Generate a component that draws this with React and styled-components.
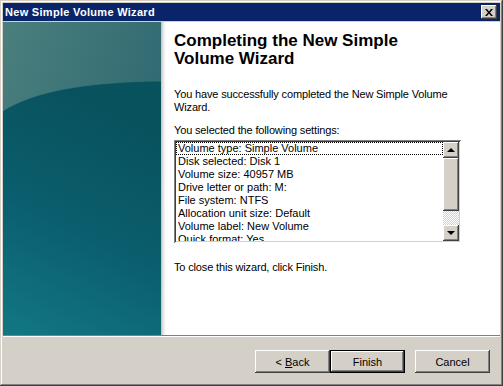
import React from 'react';
import styled, { createGlobalStyle } from 'styled-components';

const GlobalStyle = createGlobalStyle`
  html, body { margin: 0; padding: 0; background: #d4d0c8; }
  body { font-family: "Liberation Sans", Arial, sans-serif; font-size: 11px; }
`;

const Window = styled.div`
  width: 503px;
  height: 386px;
  box-sizing: border-box;
  padding: 3px;
  background: #d4d0c8;
  display: flex;
  flex-direction: column;
  box-shadow: inset -1px -1px 0 #404040, inset 1px 1px 0 #d4d0c8,
    inset -2px -2px 0 #808080, inset 2px 2px 0 #ffffff;
`;

const TitleBar = styled.div`
  height: 18px;
  background: #0a246a;
  display: flex;
  align-items: center;
  justify-content: space-between;
  padding: 0 3px 0 2px;
`;

const Title = styled.span`
  color: #fff;
  font-weight: bold;
  font-size: 11px;
  letter-spacing: 0.3px;
`;

const Raised = styled.div`
  background: #d4d0c8;
  box-sizing: border-box;
  box-shadow: inset -1px -1px 0 #404040, inset 1px 1px 0 #ffffff,
    inset -2px -2px 0 #808080, inset 2px 2px 0 #d4d0c8;
  display: flex;
  align-items: center;
  justify-content: center;
`;

const CloseBtn = styled(Raised)`
  width: 16px;
  height: 14px;
`;

const Body = styled.div`
  margin-top: 1px;
  height: 313px;
  display: flex;
  background: #fff;
`;

const Side = styled.div`
  width: 158px;
  height: 100%;
  svg { display: block; }
`;

const Shade = styled.div`
  width: 5px;
  background: linear-gradient(to right, #bdbdbd, #e4e4e4 40%, #fff);
`;

const Content = styled.div`
  flex: 1;
  padding: 10px 0 0 8px;
  color: #000;
`;

const Heading = styled.h1`
  margin: 0;
  font-family: "Liberation Sans", Arial, sans-serif;
  font-weight: bold;
  font-size: 17px;
  line-height: 18px;
`;

const Para = styled.p`
  margin: ${p => p.$top}px 0 0;
  font-size: 11px;
  line-height: 13px;
  letter-spacing: -0.15px;
`;

const ListBox = styled.div`
  margin-top: 3px;
  width: 287px;
  height: 103px;
  box-sizing: border-box;
  background: #fff;
  box-shadow: inset 1px 1px 0 #808080, inset -1px -1px 0 #ffffff,
    inset 2px 2px 0 #404040, inset -2px -2px 0 #d4d0c8;
  padding: 2px;
  display: flex;
`;

const Items = styled.div`
  flex: 1;
  overflow: hidden;
`;

const Item = styled.div`
  height: 13px;
  line-height: 13px;
  padding-left: 2px;
  white-space: nowrap;
  box-sizing: border-box;
  outline: ${p => (p.$focus ? '1px dotted #000' : 'none')};
  outline-offset: -1px;
`;

const ScrollBar = styled.div`
  width: 16px;
  display: flex;
  flex-direction: column;
`;

const ArrowBtn = styled(Raised)`
  width: 16px;
  height: 16px;
`;

const Arrow = styled.span`
  width: 0;
  height: 0;
  border-left: 4px solid transparent;
  border-right: 4px solid transparent;
  ${p => (p.$down ? 'border-top: 4px solid #000;' : 'border-bottom: 4px solid #000;')}
`;

const Thumb = styled(Raised)`
  width: 16px;
  height: 53px;
`;

const Track = styled.div`
  flex: 1;
  background: repeating-conic-gradient(#d4d0c8 0 25%, #ffffff 0 50%) 0 0 / 2px 2px;
`;

const Separator = styled.div`
  height: 2px;
  box-sizing: border-box;
  border-top: 1px solid #808080;
  border-bottom: 1px solid #ffffff;
`;

const Footer = styled.div`
  flex: 1;
  display: flex;
  justify-content: flex-end;
  align-items: flex-start;
  padding: 13px 10px 0 0;
`;

const Button = styled(Raised).attrs({ as: 'button' })`
  width: 75px;
  height: 23px;
  border: none;
  padding: 0;
  font-family: "Liberation Sans", Arial, sans-serif;
  font-size: 11px;
  color: #000;
  white-space: pre;
  margin-left: ${p => p.$gap || 0}px;
  ${p =>
    p.$default &&
    `box-shadow: inset 0 0 0 1px #000, inset -2px -2px 0 #404040, inset 2px 2px 0 #ffffff,
      inset -3px -3px 0 #808080;`}
  u { text-decoration: underline; }
`;

const settings = [
  'Volume type: Simple Volume',
  'Disk selected: Disk 1',
  'Volume size: 40957 MB',
  'Drive letter or path: M:',
  'File system: NTFS',
  'Allocation unit size: Default',
  'Volume label: New Volume',
  'Quick format: Yes',
];

function SideArt() {
  return (
    <svg width="158" height="313" viewBox="0 0 158 313">
      <defs>
        <linearGradient id="top" x1="0" y1="0" x2="1" y2="0.6">
          <stop offset="0" stopColor="#4a7f7d" />
          <stop offset="1" stopColor="#2c6670" />
        </linearGradient>
        <linearGradient id="low" x1="0.3" y1="0" x2="0" y2="1">
          <stop offset="0" stopColor="#08525e" />
          <stop offset="0.5" stopColor="#0b5e6e" />
          <stop offset="1" stopColor="#127882" />
        </linearGradient>
      </defs>
      <rect width="158" height="313" fill="url(#top)" />
      <path d="M0 89 C 30 70, 80 60, 158 59 L158 313 L0 313 Z" fill="url(#low)" />
      <path d="M0 89 C 30 70, 80 60, 158 59" stroke="#3a7478" strokeWidth="1" fill="none" opacity="0.6" />
    </svg>
  );
}

export default function App() {
  return (
    <>
      <GlobalStyle />
      <Window>
        <TitleBar>
          <Title>New Simple Volume Wizard</Title>
          <CloseBtn>
            <svg width="8" height="7" viewBox="0 0 8 7">
              <path d="M0 0h2l2 2.5L6 0h2L5 3.5 8 7H6L4 4.5 2 7H0l3-3.5z" fill="#000" />
            </svg>
          </CloseBtn>
        </TitleBar>
        <Body>
          <Side>
            <SideArt />
          </Side>
          <Shade />
          <Content>
            <Heading>
              Completing the New Simple
              <br />
              Volume Wizard
            </Heading>
            <Para $top={20}>
              You have successfully completed the New Simple Volume
              <br />
              Wizard.
            </Para>
            <Para $top={10}>You selected the following settings:</Para>
            <ListBox>
              <Items>
                {settings.map((s, i) => (
                  <Item key={s} $focus={i === 0}>{s}</Item>
                ))}
              </Items>
              <ScrollBar>
                <ArrowBtn><Arrow /></ArrowBtn>
                <Thumb />
                <Track />
                <ArrowBtn><Arrow $down /></ArrowBtn>
              </ScrollBar>
            </ListBox>
            <Para $top={18}>To close this wizard, click Finish.</Para>
          </Content>
        </Body>
        <Separator />
        <Footer>
          <Button>
            <span>{'< '}<u>B</u>ack</span>
          </Button>
          <Button $default>Finish</Button>
          <Button $gap={10}>Cancel</Button>
        </Footer>
      </Window>
    </>
  );
}
